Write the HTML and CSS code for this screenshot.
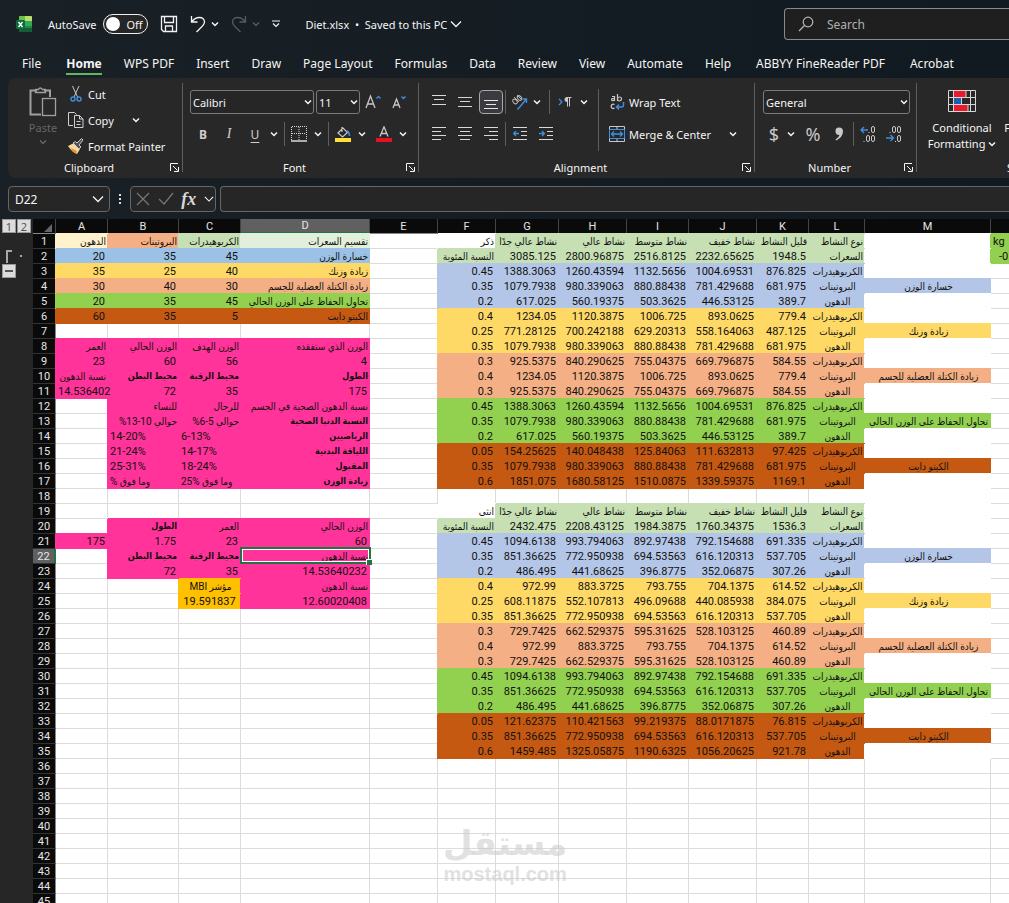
FILE: index.html
```html
<!DOCTYPE html>
<html lang="en">
<head>
  <meta charset="UTF-8" />
  <meta name="viewport" content="width=device-width, initial-scale=1.0"/>
  <title>Diet.xlsx</title>
  <link rel="stylesheet" href="styles.css">
</head>
<body>

  <!-- shared icon shapes -->
  <svg class="sprite" aria-hidden="true">
    <symbol id="i-chev" viewBox="0 0 8 8"><path d="M1 2.5l3 3 3-3" fill="none" stroke="currentColor" stroke-width="1.5"/></symbol>
    <symbol id="i-chev-lg" viewBox="0 0 12 12"><path d="M1 3.5l5 5 5-5" fill="none" stroke="currentColor" stroke-width="1.3"/></symbol>
    <symbol id="i-launch" viewBox="0 0 9 9"><path d="M.5 8V.5H8M3 3l4.500 4.500M8.500 4v4.500H4" fill="none" stroke="currentColor"/></symbol>
    <symbol id="i-undo" viewBox="0 0 16 18"><path d="M1.500 1v6h6M1.500 7C4 3.500 7 2.500 9.500 2.500c3 0 5 2 5 4.500 0 3-3 5-8 10" fill="none" stroke="currentColor" stroke-width="1.300"/></symbol>
  </svg>

  <header class="titlebar">
    <svg class="logo" viewBox="0 0 16 16">
      <rect x="3" y="0" width="13" height="16" rx="1" fill="#1f8a4c"/>
      <path d="M3 5V1q0-1 1-1h5v5z" fill="#6cc04a"/>
      <path d="M9 0h6q1 0 1 1v4H9z" fill="#b7df6b"/>
      <path d="M9 5h7v5H9z" fill="#35a853"/>
      <path d="M3 12h13v3q0 1-1 1H4q-1 0-1-1z" fill="#155c37"/>
      <rect x="0" y="4" width="9" height="9" rx="1" fill="#0d6b3d"/>
      <path d="M2.500 6l4 5M6.500 6l-4 5" stroke="#fff" stroke-width="1.400"/>
    </svg>
    <label class="autosave"><span>AutoSave</span>
      <input type="checkbox" role="switch">
      <span class="switch"><i></i>Off</span>
    </label>
    <button class="qa" aria-label="Save">
      <svg width="18" height="18" viewBox="0 0 18 18" fill="none" stroke="#f2f2f2" stroke-width="1.300"><path d="M1.500 1.500h15v15h-13l-2-2zM4.500 2v5.500h9V2M5.500 16v-5h7v5"/></svg>
    </button>
    <button class="qa undo" aria-label="Undo"><svg width="16" height="18"><use href="#i-undo"/></svg><svg width="8" height="8"><use href="#i-chev"/></svg></button>
    <button class="qa redo" aria-label="Redo" disabled><svg class="flip" width="16" height="18"><use href="#i-undo"/></svg><svg width="8" height="8"><use href="#i-chev"/></svg></button>
    <button class="qa" aria-label="Customize Quick Access Toolbar">
      <svg width="8" height="8" viewBox="0 0 8 8" fill="none" stroke="#f2f2f2" stroke-width="1.200"><path d="M0 1h8M1 3.500l3 3 3-3"/></svg>
    </button>
    <button class="doc">Diet.xlsx&nbsp; •&nbsp; Saved to this PC <svg width="12" height="12"><use href="#i-chev-lg"/></svg></button>
    <label class="search">
      <svg width="16" height="16" viewBox="0 0 16 16" fill="none" stroke="#b5b5b5" stroke-width="1.200"><circle cx="10" cy="6" r="4.800"/><path d="M6.500 9.500L1 15"/></svg>
      <input type="search" placeholder="Search" aria-label="Search">
    </label>
  </header>

  <nav class="tabs">
    <a href="#">File</a>
    <a href="#" class="active">Home</a>
    <a href="#">WPS PDF</a>
    <a href="#">Insert</a>
    <a href="#">Draw</a>
    <a href="#">Page Layout</a>
    <a href="#">Formulas</a>
    <a href="#">Data</a>
    <a href="#">Review</a>
    <a href="#">View</a>
    <a href="#">Automate</a>
    <a href="#">Help</a>
    <a href="#" class="addin">ABBYY FineReader PDF</a>
    <a href="#" class="addin">Acrobat</a>
  </nav>

  <section class="ribbon">
    <div class="group clipboard">
      <div class="tools">
        <button class="paste" disabled>
          <svg width="28" height="31" viewBox="0 0 28 31" fill="none" stroke="#a0a0a0"><path d="M12 28.500H1.500v-24H8M15 4.500h6V11" stroke-width="2"/><path d="M6.500 6.500v-3h3q1.500-3 4 0h3v3z" stroke-width="1.300"/><rect x="13.500" y="12.500" width="13" height="17" stroke-width="1.300"/></svg>
          Paste
          <svg width="8" height="8"><use href="#i-chev"/></svg>
        </button>
        <div class="cmds">
          <button><svg width="16" height="16" viewBox="0 0 16 16" fill="none"><path d="M4.500 0l5 11M11 0L6 11" stroke="#c8c8c8"/><circle cx="5" cy="13" r="2" stroke="#3f8fe0" stroke-width="1.400"/><circle cx="11" cy="13" r="2" stroke="#3f8fe0" stroke-width="1.400"/></svg>Cut</button>
          <button><svg width="16" height="16" viewBox="0 0 16 16" fill="none" stroke="#d0d0d0"><path d="M5 13.500H.5V.5h6l2 2M6.500 3.500h5l3.500 3.500v8.500H6.500zM11.500 3.500V7H15M8.500 9.500h4M8.500 12.500h4"/></svg>Copy<svg class="far" width="8" height="8"><use href="#i-chev"/></svg></button>
          <button><svg width="16" height="16" viewBox="0 0 16 16"><path d="M0 8l6-3 6 6-3 5q-5-2-9-8z" fill="#f6d9a0"/><path d="M3 10l6 3-1 2.500q-4-1-5-5.500z" fill="#e8912d"/><path d="M5 5l6 6 2-2-2-2 4-5-1.500-1.500L9 5 7.500 3.500z" fill="#555" stroke="#c8c8c8"/></svg>Format Painter</button>
        </div>
      </div>
      <div class="caption"><span>Clipboard</span><button aria-label="Clipboard settings"><svg width="9" height="9"><use href="#i-launch"/></svg></button></div>
    </div>

    <div class="group font">
      <div class="tools rows">
        <div class="row">
          <span class="combo name"><select aria-label="Font"><option>Calibri</option></select><svg width="8" height="8"><use href="#i-chev"/></svg></span>
          <span class="combo size"><select aria-label="Font size"><option>11</option></select><svg width="8" height="8"><use href="#i-chev"/></svg></span>
          <button class="btn" aria-label="Increase font size"><svg width="16" height="16" viewBox="0 0 16 16" fill="none" stroke="#c8c8c8" stroke-width="1.300"><path d="M1 14L5.500 2 10 14M2.500 10h6"/><path d="M11.500 4.500l2-2 2 2" stroke="#3f8fe0"/></svg></button>
          <button class="btn" aria-label="Decrease font size"><svg width="16" height="16" viewBox="0 0 16 16" fill="none" stroke="#c8c8c8" stroke-width="1.300"><path d="M2 14l3.500-9L9 14M3 11h5"/><path d="M10.500 2.500l2 2 2-2" stroke="#3f8fe0"/></svg></button>
        </div>
        <div class="row">
          <button class="btn glyph"><b>B</b></button>
          <button class="btn glyph"><i>I</i></button>
          <button class="btn glyph"><u>U</u></button>
          <button class="chev" aria-label="Underline options"><svg width="8" height="8"><use href="#i-chev"/></svg></button>
          <i class="sep"></i>
          <button class="btn" aria-label="Borders"><svg width="16" height="16" viewBox="0 0 16 16" fill="none" stroke="#d8d8d8"><path d="M.5 14V.5h15V14M8 1v13M1 7.500h14" stroke-dasharray="1 1"/><path d="M0 15h16" stroke-width="1.500"/></svg></button>
          <button class="chev" aria-label="Border options"><svg width="8" height="8"><use href="#i-chev"/></svg></button>
          <i class="sep"></i>
          <button class="btn" aria-label="Fill color"><svg width="16" height="16" viewBox="0 0 16 16" fill="none"><path d="M7 1v5M3 7l5-5 4.500 4.500-5 4.500z" stroke="#c8c8c8" stroke-width="1.200"/><path d="M12 5q2.500 1 2.500 5" stroke="#3f8fe0" stroke-width="1.500"/><path d="M0 12h16v4H0z" fill="#ffe135"/></svg></button>
          <button class="chev" aria-label="Fill options"><svg width="8" height="8"><use href="#i-chev"/></svg></button>
          <i class="gap"></i>
          <button class="btn" aria-label="Font color"><svg width="16" height="16" viewBox="0 0 16 16" fill="none"><path d="M4 10.500L8 .8l4 9.700M5.500 7.500h5" stroke="#c8c8c8" stroke-width="1.300"/><path d="M0 12h16v4H0z" fill="#e81123"/></svg></button>
          <button class="chev" aria-label="Font color options"><svg width="8" height="8"><use href="#i-chev"/></svg></button>
        </div>
      </div>
      <div class="caption"><span>Font</span><button aria-label="Font settings"><svg width="9" height="9"><use href="#i-launch"/></svg></button></div>
    </div>

    <div class="group align">
      <div class="tools">
        <div class="rows">
          <div class="row">
            <button class="btn" aria-label="Top align"><svg width="14" height="14" viewBox="0 0 14 14" stroke="#d8d8d8"><path d="M0 .5h14M2 4.500h10M0 9.500h14"/></svg></button>
            <button class="btn" aria-label="Middle align"><svg width="14" height="14" viewBox="0 0 14 14" stroke="#d8d8d8"><path d="M0 2.500h14M2 6.500h10M0 11.500h14"/></svg></button>
            <button class="btn on" aria-label="Bottom align"><svg width="14" height="14" viewBox="0 0 14 14" stroke="#e8e8e8"><path d="M0 5.500h14M2 9.500h10M0 13.500h14"/></svg></button>
            <i class="sep tight"></i>
            <button class="btn" aria-label="Orientation"><svg width="16" height="16" viewBox="0 0 16 16" fill="none" stroke="#b8b8b8"><ellipse cx="3" cy="7.500" rx="2.600" ry="1.800" transform="rotate(45 3 7.500)"/><path d="M2 3l5 5"/><ellipse cx="7.500" cy="4" rx="2.600" ry="1.800" transform="rotate(45 7.500 4)"/><path d="M5 1l5 5"/><path d="M5.500 15.500L14.500 5M10.500 5h4v4" stroke="#3f8fe0" stroke-width="1.400"/></svg></button>
            <button class="chev snug" aria-label="Orientation options"><svg width="8" height="8"><use href="#i-chev"/></svg></button>
            <i class="sep wide"></i>
            <button class="btn" aria-label="Text direction"><svg width="14" height="10" viewBox="0 0 14 10" fill="none"><path d="M1 2l3 3-3 3" stroke="#3f8fe0" stroke-width="1.300"/><path d="M9.500 9.500V.5M11.500 9.500V.5M13.500.5H8" stroke="#c8c8c8"/><path d="M9.500 0v5Q6.500 5 6.500 2.500T9.500 0z" fill="#c8c8c8"/></svg></button>
            <button class="chev" aria-label="Direction options"><svg width="8" height="8"><use href="#i-chev"/></svg></button>
          </div>
          <div class="row">
            <button class="btn" aria-label="Align left"><svg width="14" height="14" viewBox="0 0 14 14" stroke="#d8d8d8"><path d="M0 .5h14M0 4.500h9M0 8.500h14M0 12.500h9"/></svg></button>
            <button class="btn" aria-label="Center"><svg width="14" height="14" viewBox="0 0 14 14" stroke="#d8d8d8"><path d="M0 .5h14M2 4.500h10M0 8.500h14M2 12.500h10"/></svg></button>
            <button class="btn" aria-label="Align right"><svg width="14" height="14" viewBox="0 0 14 14" stroke="#d8d8d8"><path d="M0 .5h14M5 4.500h9M0 8.500h14M5 12.500h9"/></svg></button>
            <i class="sep tight"></i>
            <button class="btn" aria-label="Decrease indent"><svg width="14" height="14" viewBox="0 0 14 14" fill="none" stroke="#d8d8d8"><path d="M0 .5h14M8 4.500h6M8 8.500h6M0 12.500h14"/><path d="M6 6.500H.8M3 4L.6 6.500 3 9" stroke="#3f8fe0" stroke-width="1.300"/></svg></button>
            <button class="btn" aria-label="Increase indent"><svg width="14" height="14" viewBox="0 0 14 14" fill="none" stroke="#d8d8d8"><path d="M0 .5h14M8 4.500h6M8 8.500h6M0 12.500h14"/><path d="M0 6.500h5.200M3 4l2.400 2.500L3 9" stroke="#3f8fe0" stroke-width="1.300"/></svg></button>
          </div>
        </div>
        <div class="rows side">
          <button class="wide-btn"><svg width="16" height="16" viewBox="0 0 16 16" fill="none" stroke="#c8c8c8" stroke-width="1.200"><path d="M3 2.500h2.500V7M5.500 4.500H3.200q-1.200 1.300 0 2.200 1.300.3 2.300-1M8.500 0v7"/><circle cx="10.500" cy="5" r="2"/><path d="M5.500 10.500Q4 9.500 2.500 11q-1 2.500 1 3.500 1 .3 2-.5"/><path d="M14.500 8v3q0 2-2 2H8M10 10.500L7.500 13l2.500 2.500" stroke="#3f8fe0" stroke-width="1.500"/></svg>Wrap Text</button>
          <button class="wide-btn merge"><svg width="16" height="16" viewBox="0 0 16 16" fill="none" stroke="#c8c8c8"><path d="M.5.5h15v15H.5zM8 1v2M8 13v2"/><path d="M.5 3.500h15v9H.5z" stroke="#3f8fe0"/><path d="M2.500 8h11M5 5.500L2.500 8 5 10.500M11 5.500L13.500 8 11 10.500" stroke="#3f8fe0" stroke-width="1.300"/></svg>Merge &amp; Center<svg class="far" width="8" height="8"><use href="#i-chev"/></svg></button>
        </div>
      </div>
      <div class="caption"><span>Alignment</span><button aria-label="Alignment settings"><svg width="9" height="9"><use href="#i-launch"/></svg></button></div>
    </div>

    <div class="group number">
      <div class="tools rows">
        <div class="row">
          <span class="combo general"><select aria-label="Number format"><option>General</option></select><svg width="8" height="8"><use href="#i-chev"/></svg></span>
        </div>
        <div class="row">
          <button class="btn sign narrow">$</button>
          <button class="chev" aria-label="Currency options"><svg width="8" height="8"><use href="#i-chev"/></svg></button>
          <i class="gap"></i>
          <button class="btn sign">%</button>
          <button class="btn" aria-label="Comma style"><svg width="10" height="14" viewBox="0 0 10 14"><path d="M5 .5a4 4 0 0 1 4 4q0 5.500-7 9l-.5-1Q5 10.500 5.500 8A3.700 3.700 0 1 1 5 .5z" fill="#c8c8c8"/></svg></button>
          <i class="sep tight"></i>
          <button class="btn" aria-label="Increase decimal"><svg width="16" height="16" viewBox="0 0 16 16" fill="none" stroke="#c8c8c8"><rect x="11.500" y=".5" width="3" height="6" rx="1.500"/><rect x="6.500" y="9.500" width="3" height="6" rx="1.500"/><rect x="11.500" y="9.500" width="3" height="6" rx="1.500"/><path d="M8.500 6.500h1M3.500 15.500h1"/><path d="M8 4H1M4 1L1 4l3 3" stroke="#3f8fe0" stroke-width="1.300"/></svg></button>
          <button class="btn" aria-label="Decrease decimal"><svg width="16" height="16" viewBox="0 0 16 16" fill="none" stroke="#c8c8c8"><rect x="6.500" y=".5" width="3" height="6" rx="1.500"/><rect x="11.500" y=".5" width="3" height="6" rx="1.500"/><rect x="11.500" y="9.500" width="3" height="6" rx="1.500"/><path d="M3.500 6.500h1M9 15.500h1"/><path d="M0 12h7M4.500 9l3 3-3 3" stroke="#3f8fe0" stroke-width="1.300"/></svg></button>
        </div>
      </div>
      <div class="caption"><span>Number</span><button aria-label="Number settings"><svg width="9" height="9"><use href="#i-launch"/></svg></button></div>
    </div>

    <div class="group styles">
      <div class="tools">
        <button class="big">
          <svg width="28" height="22" viewBox="0 0 28 22"><path d="M5 1h13v6H5zM5 15h15v6H5z" fill="#e81a2b"/><path d="M5 8h8v6H5z" fill="#1a5fb4"/><path d="M.5.5h27v21H.5zM5.500 0v22M22.500 0v22M0 7.500h28M0 14.500h28M18 1v6M13.500 8v6M20 15v6" fill="none" stroke="#d8d8d8"/></svg>
          <span>Conditional<br>Formatting <svg width="8" height="8"><use href="#i-chev"/></svg></span>
        </button>
        <button class="big">
          <svg width="28" height="22" viewBox="0 0 28 22" fill="none" stroke="#d8d8d8"><path d="M.5.5h27v21H.5zM9.500 0v22M18.500 0v22M0 7.500h28M0 14.500h28"/></svg>
          <span>Format as<br>Table <svg width="8" height="8"><use href="#i-chev"/></svg></span>
        </button>
      </div>
      <div class="caption"><span>Styles</span></div>
    </div>
  </section>

  <section class="formula">
    <label class="namebox"><input type="text" value="D22" aria-label="Name box"><svg width="12" height="12"><use href="#i-chev-lg"/></svg></label>
    <span class="dots"></span>
    <div class="fx">
      <button aria-label="Cancel"><svg width="14" height="14" viewBox="0 0 14 14" stroke="#777" stroke-width="1.200"><path d="M1 1l12 12M13 1L1 13"/></svg></button>
      <button aria-label="Enter"><svg width="16" height="14" viewBox="0 0 16 14" fill="none" stroke="#777" stroke-width="1.200"><path d="M1 7l5 5L15 1"/></svg></button>
      <button class="fn"><i>fx</i></button>
      <button aria-label="Functions"><svg width="10" height="10" viewBox="0 0 12 12"><use href="#i-chev-lg"/></svg></button>
    </div>
    <input class="bar" type="text" aria-label="Formula bar">
  </section>

  <main class="sheet">
    <aside class="outline">
      <div class="levels"><button>1</button><button>2</button></div>
      <div class="bracket"><i></i><b></b></div>
      <button class="collapse" aria-label="Collapse group"></button>
    </aside>
    <table id="grid"></table>
    <div class="watermark"><span lang="ar">مستقل</span><small>mostaql.com</small></div>
  </main>

  <script src="script.js"></script>
</body>
</html>
```

FILE: styles.css
```css
* {
  box-sizing: border-box;
}
body {
  margin: 0;
  height: 100vh;
  display: flex;
  flex-direction: column;
  overflow: hidden;
  background: linear-gradient(90deg, #192026, #111a21);
  color: #f5f5f5;
  font-family: "Noto Sans", "DejaVu Sans Condensed", sans-serif;
  font-size: 11px;
}
button, input, select {
  font: inherit;
  color: inherit;
  background: none;
  border: 0;
  padding: 0;
  margin: 0;
}
button {
  display: flex;
  align-items: center;
  white-space: nowrap;
}
svg {
  flex: none;
  display: block;
}
.sprite {
  position: absolute;
  width: 0;
  height: 0;
}

/* title bar */
.titlebar {
  flex: none;
  display: flex;
  align-items: center;
  height: 48px;
  padding-left: 16px;
}
.logo {
  width: 16px;
  height: 16px;
}
.autosave {
  display: flex;
  align-items: center;
  gap: 7px;
  margin: 0 12px 0 16px;
}
.autosave input {
  position: absolute;
  opacity: 0;
}
.switch {
  display: flex;
  align-items: center;
  gap: 6px;
  width: 45px;
  height: 20px;
  padding-left: 2px;
  border: 1px solid #f0f0f0;
  border-radius: 10px;
  background: #262626;
}
.switch i {
  width: 14px;
  height: 14px;
  border-radius: 50%;
  background: #fff;
}
.qa {
  gap: 5px;
}
.undo {
  margin: 0 12px;
}
.redo {
  margin-right: 12px;
  color: #555b60;
}
.flip {
  transform: scaleX(-1);
}
.doc {
  gap: 3px;
  margin-left: 25px;
}
.search {
  display: flex;
  align-items: center;
  gap: 13px;
  flex: 1 0 200px;
  height: 32px;
  margin-left: auto;
  padding-left: 13px;
  max-width: 225px;
  border: 1px solid #8a8a8a;
  border-right: 0;
  border-radius: 4px 0 0 4px;
  background: #1f1f1f;
  font-size: 12px;
}
.search input {
  flex: 1;
  min-width: 0;
}
.search input::placeholder {
  color: #b0b0b0;
}

/* tabs */
.tabs {
  flex: none;
  display: flex;
  height: 30px;
  padding-left: 11px;
  font-size: 12px;
}
.tabs a {
  flex: none;
  margin: 0 11px;
  height: 27px;
  line-height: 31px;
  color: inherit;
  text-decoration: none;
}
.tabs a:first-child {
  margin-right: 14px;
}
.tabs .addin {
  margin-left: 14px;
}
.tabs .active {
  font-weight: bold;
  border-bottom: 2px solid #5fb760;
}

/* ribbon */
.ribbon {
  flex: none;
  display: flex;
  height: 100px;
  margin-left: 8px;
  overflow: hidden;
  border-radius: 8px 0 0 8px;
  background: #282828;
}
.group {
  flex: none;
  display: flex;
  flex-direction: column;
  position: relative;
}
.group::after {
  content: "";
  position: absolute;
  right: 0;
  top: 5px;
  bottom: 6px;
  width: 1px;
  background: #5e5e5e;
}
.clipboard {
  width: 175px;
}
.font {
  width: 236px;
}
.align {
  width: 336px;
}
.number {
  width: 162px;
}
.styles {
  width: 214px;
}
.tools {
  display: flex;
  height: 81px;
}
.caption {
  display: flex;
  align-items: center;
  height: 16px;
  padding-right: 4px;
}
.caption span {
  flex: 1;
  text-align: center;
}
.rows {
  display: flex;
  flex-direction: column;
  gap: 8px;
  padding: 12px 0 0 7px;
}
.row {
  display: flex;
  align-items: center;
  height: 24px;
}
.paste {
  flex-direction: column;
  width: 44px;
  margin: 8px 3px 0 13px;
  gap: 3px;
  color: #666;
}
.cmds button, .wide-btn {
  gap: 4px;
  height: 26px;
}
.cmds {
  padding-top: 3px;
}
.far {
  margin-left: 14px;
}
.combo {
  position: relative;
  height: 24px;
}
.combo select {
  appearance: none;
  width: 100%;
  height: 24px;
  padding-left: 2px;
  border: 1px solid #7a7a7a;
  border-radius: 3px;
  background: #262626;
}
.combo svg {
  position: absolute;
  right: 2px;
  top: 8px;
  pointer-events: none;
}
.name {
  width: 124px;
}
.size {
  width: 44px;
  margin: 0 0 0 2px;
}
.general {
  width: 147px;
}
.btn {
  flex: none;
  justify-content: center;
  width: 26px;
  height: 24px;
}
.narrow {
  width: 22px;
}
.on {
  width: 24px;
  margin: 0 1px;
  border: 1px solid #a8a8a8;
  border-radius: 4px;
  background: #3a3a3f;
}
.glyph {
  font-size: 12px;
  color: #cfcfcf;
}
.glyph i {
  font-family: "Liberation Serif", serif;
  font-size: 14px;
}
.glyph u {
  text-underline-offset: 3px;
}
.chev {
  justify-content: center;
  width: 12px;
  height: 24px;
}
.snug {
  width: 8px;
}
.gap {
  width: 3px;
}
.sep {
  width: 1px;
  height: 24px;
  margin: 0 1px 0 4px;
  background: #5e5e5e;
}
.tight {
  margin: 0 1px;
}
.wide {
  margin: 0 2px 0 8px;
}
.side {
  position: relative;
  gap: 6px;
  margin-left: 8px;
  padding: 11px 0 0 11px;
}
.side::before {
  content: "";
  position: absolute;
  left: 0;
  top: 11px;
  width: 1px;
  height: 62px;
  background: #5e5e5e;
}
.number .rows {
  padding-left: 8px;
}
.sign {
  font-size: 18px;
  color: #c8c8c8;
}
.styles .tools {
  padding: 12px 0 0 5px;
}
.big {
  flex-direction: column;
  justify-content: flex-start;
  gap: 8px;
  width: 80px;
  line-height: 16px;
}
.big + .big {
  width: 56px;
}
.big span svg {
  display: inline-block;
}

/* formula bar */
.formula {
  flex: none;
  display: flex;
  height: 41px;
  padding: 8px 0 7px 8px;
  font-size: 12px;
}
.namebox, .fx, .bar {
  display: flex;
  align-items: center;
  height: 26px;
  border: 1px solid #666;
  border-radius: 4px;
  background: #262626;
}
.namebox {
  width: 102px;
  padding: 0 5px 0 6px;
}
.namebox input {
  flex: 1;
  min-width: 0;
}
.dots {
  width: 2px;
  margin: 8px 9px;
  background: repeating-linear-gradient(#e0e0e0 0 2px, transparent 2px 4px);
}
.fx {
  width: 86px;
  padding: 0 1px 0 5px;
  justify-content: space-between;
}
.fn i {
  font-family: "Liberation Serif", serif;
  font-size: 18px;
  font-weight: bold;
  color: #d8d8d8;
}
.bar {
  flex: 1;
  min-width: 0;
  margin-left: 4px;
  border-right: 0;
  border-radius: 4px 0 0 4px;
}

/* sheet */
.sheet {
  flex: 1;
  display: flex;
  position: relative;
  min-height: 0;
  overflow: hidden;
  background: #fff;
  color: #111;
}
.outline {
  flex: none;
  width: 33px;
  padding-left: 2px;
  background: #262626;
}
.levels {
  display: flex;
  gap: 1px;
}
.levels button, .collapse {
  justify-content: center;
  width: 14px;
  height: 14px;
  border: 1px solid #999;
  background: #dcdcdc;
  color: #555;
}
.bracket {
  display: flex;
  justify-content: space-between;
  width: 20px;
  margin: 17px 0 1px 4px;
  padding-right: 4px;
}
.bracket i {
  width: 6px;
  height: 13px;
  border: 2px solid #a8a8a8;
  border-width: 2px 0 0 2px;
}
.bracket b {
  width: 2px;
  height: 2px;
  margin-top: 5px;
  background: #a8a8a8;
}
.collapse::before {
  content: "";
  width: 8px;
  height: 2px;
  background: #555;
}
#grid {
  table-layout: fixed;
  width: calc(100% - 33px);
  flex: none;
  align-self: flex-start;
  border-spacing: 0;
  font-family: Roboto, "DejaVu Sans Condensed", sans-serif;
}
#grid th, #grid td {
  height: 15px;
  padding: 1px 2px 0;
  line-height: 13px;
  white-space: nowrap;
}
#grid th {
  padding: 1px 0 0;
  background: #0a0a0a;
  color: #e6e6e6;
  font-weight: normal;
  border-right: 1px solid #444;
  border-bottom: 1px solid #333;
}
#grid thead th {
  border-bottom-color: #888;
}
#grid tbody th {
  border-right-color: #888;
}
#grid thead .picked {
  background: #606060;
  border-bottom: 2px solid #217346;
  line-height: 12px;
}
#grid tbody .picked {
  background: #606060;
  border-right: 2px solid #217346;
}
.corner i {
  display: block;
  margin: 2px 3px 0 auto;
  width: 0;
  border: 4px solid #666;
  border-top-color: transparent;
  border-left-color: transparent;
}
#grid td {
  text-align: right;
  border-right: 1px solid #dcdcdc;
  border-bottom: 1px solid #dcdcdc;
}
#grid .filled {
  background: var(--fill);
  border-color: var(--fill);
  box-shadow: 0 -1px var(--fill), -1px 0 var(--fill);
}
.white { --fill: #fff; }
.cream { --fill: #fff2cc; }
.mint { --fill: #e2efda; }
.sage { --fill: #c6e0b4; }
.sky { --fill: #9bc2e6; }
.blue { --fill: #b4c6e7; }
.yellow { --fill: #ffd966; }
.salmon { --fill: #f4b084; }
.green { --fill: #92d050; }
.brown { --fill: #c65911; }
.pink { --fill: #ff3399; }
.gold { --fill: #ffc000; }
#grid .left {
  text-align: left;
}
#grid .center {
  text-align: center;
}
#grid .indent {
  padding-left: 8px;
}
#grid .ar {
  font-size: 10px;
}
#grid .bold {
  font-weight: bold;
}
#grid .bold.ar {
  font-size: 9px;
}
#grid .cursor {
  position: relative;
}
.cursor i {
  position: absolute;
  inset: -2px -1px -1px -2px;
  border: 2px solid #217346;
  box-shadow: inset 0 0 0 1px #fff;
}
.cursor i::after {
  content: "";
  position: absolute;
  right: -3px;
  bottom: -3px;
  width: 5px;
  height: 5px;
  background: #217346;
  border: 1px solid #fff;
  border-width: 1px 0 0 1px;
}
.watermark {
  position: absolute;
  left: 443px;
  top: 604px;
  display: flex;
  flex-direction: column;
  align-items: center;
  color: rgba(200, 200, 200, 0.55);
  font-family: "DejaVu Sans", sans-serif;
  font-weight: bold;
  pointer-events: none;
}
.watermark span {
  font-size: 34px;
  line-height: 40px;
}
.watermark small {
  font-family: "Liberation Sans", sans-serif;
  font-size: 20px;
  line-height: 22px;
}
```

FILE: script.js
```js
const COLS = 'ABCDEFGHIJKLMN'.split('');
const WIDTHS = [52, 71, 62, 129, 68, 58, 63, 68, 62, 68, 52, 56, 126, 64];
const ROWS = 46;
const cells = {};

// put a run of values into one row, left to right
function put(row, from, fill, values, cls = '') {
  const start = COLS.indexOf(from);
  values.forEach((text, i) => {
    cells[COLS[start + i] + row] = { text, cls: `filled ${fill} ${cls}` };
  });
}

// calories split
put(1, 'A', 'cream', ['الدهون']);
put(1, 'B', 'salmon', ['البروتينات']);
put(1, 'C', 'sage', ['الكربوهيدرات']);
put(1, 'D', 'mint', ['تقسيم السعرات']);
put(2, 'A', 'sky', ['20', '35', '45', 'خسارة الوزن']);
put(3, 'A', 'yellow', ['35', '25', '40', 'زيادة وزنك']);
put(4, 'A', 'salmon', ['30', '40', '30', 'زيادة الكتلة العضلية للجسم']);
put(5, 'A', 'green', ['20', '35', '45', 'تحاول الحفاظ على الوزن الحالي']);
put(6, 'A', 'brown', ['60', '35', '5', 'الكيتو دايت']);

// body measurements
put(8, 'A', 'pink', ['العمر', 'الوزن الحالي', 'الوزن الهدف', 'الوزن الذي ستفقده']);
put(9, 'A', 'pink', ['23', '60', '56', '4']);
put(10, 'A', 'pink', ['نسبة الدهون']);
put(10, 'B', 'pink', ['محيط البطن', 'محيط الرقبة', 'الطول'], 'bold');
put(11, 'A', 'pink', ['14.536402', '72', '35', '175']);
put(12, 'B', 'pink', ['للنساء', 'للرجال', 'نسبة الدهون الصحية في الجسم']);
put(13, 'B', 'pink', ['حوالي 10-13%', 'حوالي 5-6%']);
put(14, 'B', 'pink', ['14-20%', '6-13%'], 'left');
put(15, 'B', 'pink', ['21-24%', '14-17%'], 'left');
put(16, 'B', 'pink', ['25-31%', '18-24%'], 'left');
put(17, 'B', 'pink', ['% وما فوق', '25% وما فوق'], 'left');
['النسبة الدنيا الصحية', 'الرياضيين', 'اللياقة البدنية', 'المقبول', 'زيادة الوزن']
  .forEach((t, i) => put(13 + i, 'D', 'pink', [t], 'bold'));

put(20, 'B', 'pink', ['الطول'], 'bold');
put(20, 'C', 'pink', ['العمر', 'الوزن الحالي']);
put(21, 'A', 'pink', ['175', '1.75', '23', '60']);
put(22, 'B', 'pink', ['محيط البطن', 'محيط الرقبة'], 'bold');
put(22, 'D', 'pink', ['نسبة الدهون'], 'cursor');
put(23, 'B', 'pink', ['72', '35', '14.53640232']);
put(24, 'C', 'gold', ['مؤشر MBI'], 'center');
put(24, 'D', 'pink', ['نسبة الدهون']);
put(25, 'C', 'gold', ['19.591837'], 'center');
put(25, 'D', 'pink', ['12.60020408']);

// activity tables, G to K per row
const plans = [
  ['blue', 'خسارة الوزن'],
  ['yellow', 'زيادة وزنك'],
  ['salmon', 'زيادة الكتلة العضلية للجسم'],
  ['green', 'تحاول الحفاظ على الوزن الحالي'],
  ['brown', 'الكيتو دايت']
];
const nutrients = ['الكربوهيدرات', 'البروتينات', 'الدهون'];
const levels = ['نشاط عالي جدًا', 'نشاط عالي', 'نشاط متوسط', 'نشاط خفيف', 'قليل النشاط', 'نوع النشاط'];

const male = `3085.125 2800.96875 2516.8125 2232.65625 1948.5
0.45 1388.3063 1260.43594 1132.5656 1004.69531 876.825
0.35 1079.7938 980.339063 880.88438 781.429688 681.975
0.2 617.025 560.19375 503.3625 446.53125 389.7
0.4 1234.05 1120.3875 1006.725 893.0625 779.4
0.25 771.28125 700.242188 629.20313 558.164063 487.125
0.35 1079.7938 980.339063 880.88438 781.429688 681.975
0.3 925.5375 840.290625 755.04375 669.796875 584.55
0.4 1234.05 1120.3875 1006.725 893.0625 779.4
0.3 925.5375 840.290625 755.04375 669.796875 584.55
0.45 1388.3063 1260.43594 1132.5656 1004.69531 876.825
0.35 1079.7938 980.339063 880.88438 781.429688 681.975
0.2 617.025 560.19375 503.3625 446.53125 389.7
0.05 154.25625 140.048438 125.84063 111.632813 97.425
0.35 1079.7938 980.339063 880.88438 781.429688 681.975
0.6 1851.075 1680.58125 1510.0875 1339.59375 1169.1`;

const female = `2432.475 2208.43125 1984.3875 1760.34375 1536.3
0.45 1094.6138 993.794063 892.97438 792.154688 691.335
0.35 851.36625 772.950938 694.53563 616.120313 537.705
0.2 486.495 441.68625 396.8775 352.06875 307.26
0.4 972.99 883.3725 793.755 704.1375 614.52
0.25 608.11875 552.107813 496.09688 440.085938 384.075
0.35 851.36625 772.950938 694.53563 616.120313 537.705
0.3 729.7425 662.529375 595.31625 528.103125 460.89
0.4 972.99 883.3725 793.755 704.1375 614.52
0.3 729.7425 662.529375 595.31625 528.103125 460.89
0.45 1094.6138 993.794063 892.97438 792.154688 691.335
0.35 851.36625 772.950938 694.53563 616.120313 537.705
0.2 486.495 441.68625 396.8775 352.06875 307.26
0.05 121.62375 110.421563 99.219375 88.0171875 76.815
0.35 851.36625 772.950938 694.53563 616.120313 537.705
0.6 1459.485 1325.05875 1190.6325 1056.20625 921.78`;

for (let r = 1; r <= 35; r++) put(r, 'M', 'white', ['']);

function activityTable(top, label, data) {
  const lines = data.split('\n').map(l => l.split(' '));
  put(top, 'F', 'white', [label]);
  put(top, 'G', 'sage', levels);
  put(top + 1, 'F', 'sage', ['النسبة المئوية', ...lines[0], 'السعرات']);
  lines.slice(1).forEach((line, i) => {
    const [fill, plan] = plans[Math.floor(i / 3)];
    const row = top + 2 + i;
    put(row, 'F', fill, line);
    put(row, 'L', fill, [nutrients[i % 3]], 'center');
    if (i % 3 === 1) put(row, 'M', fill, [plan], 'center');
  });
}
activityTable(1, 'ذكر', male);
activityTable(19, 'انثى', female);

put(1, 'N', 'green', ['kg'], 'left');
put(2, 'N', 'green', ['-0'], 'left indent');

// draw the grid
let html = '<colgroup><col style="width:23px">';
html += WIDTHS.map(w => `<col style="width:${w}px">`).join('') + '<col></colgroup>';
html += '<thead><tr><th class="corner"><i></i></th>';
html += COLS.map(c => `<th${c === 'D' ? ' class="picked"' : ''}>${c}</th>`).join('') + '<th></th></tr></thead><tbody>';
for (let r = 1; r <= ROWS; r++) {
  html += `<tr><th${r === 22 ? ' class="picked"' : ''}>${r}</th>`;
  for (const c of COLS) {
    const cell = cells[c + r];
    if (!cell) {
      html += '<td></td>';
      continue;
    }
    const arabic = /[\u0600-\u06ff]/.test(cell.text);
    const dir = arabic && !cell.cls.includes('left') ? ' dir="rtl"' : '';
    const mark = cell.cls.includes('cursor') ? '<i></i>' : '';
    html += `<td class="${cell.cls}${arabic ? ' ar' : ''}"${dir}>${cell.text}${mark}</td>`;
  }
  html += '<td></td></tr>';
}
document.getElementById('grid').innerHTML = html + '</tbody>';
```
